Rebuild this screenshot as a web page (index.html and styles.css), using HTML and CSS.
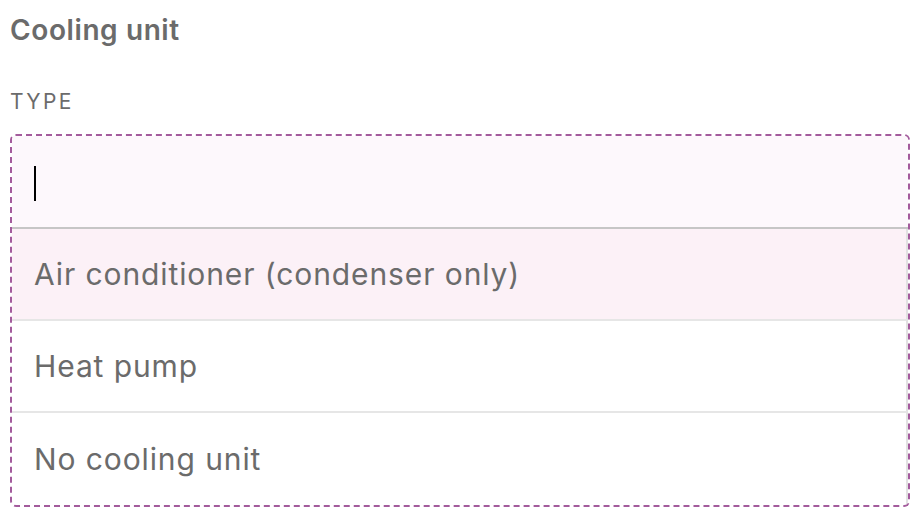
FILE: index.html
```html
<!DOCTYPE html>
<html lang="en">
<head>
  <meta charset="UTF-8">
  <meta name="viewport" content="width=device-width, initial-scale=1.0">
  <title>Cooling unit</title>
  <link rel="stylesheet" href="styles.css">
</head>
<body>
  <div class="field">
    <h2 class="field-title">Cooling unit</h2>
    <label class="field-label" for="type-input">Type</label>
    <div class="combo">
      <div class="combo-input" id="type-input"><span class="caret"></span></div>
      <ul class="combo-list">
        <li class="combo-option active">Air conditioner (condenser only)</li>
        <li class="combo-option">Heat pump</li>
        <li class="combo-option">No cooling unit</li>
      </ul>
    </div>
  </div>
</body>
</html>
```

FILE: styles.css
```css
body { margin: 0; padding: 0 10px; font-family: Inter, "Noto Sans", sans-serif; color: #6b6b6b; background: #fff; }
.field { width: 900px; }
.field-title { font-size: 28px; font-weight: 600; letter-spacing: 0.6px; margin: 0; padding-top: 13px; line-height: 34px; }
.field-label { display: block; text-transform: uppercase; font-size: 21px; letter-spacing: 2.4px; margin-top: 43px; line-height: 24px; }
.combo { margin-top: 20px; border: 2px dashed #a35b9c; border-radius: 6px; overflow: hidden; }
.combo-input { height: 91px; background: #fdf8fc; border-bottom: 2px solid #c6c6c6; display: flex; align-items: center; padding-left: 22px; }
.caret { display: block; width: 2px; height: 35px; margin-top: 3px; background: #000; }
.combo-list { list-style: none; margin: 0; padding: 0; }
.combo-option { height: 90px; display: flex; align-items: center; padding-left: 22px; font-size: 30px; letter-spacing: 0.9px; border-right: 2px solid #e2e2e2; }
.combo-option + .combo-option { border-top: 2px solid #e6e6e6; }
.combo-option:last-child { height: 92px; }
.combo-option.active { background: #fcf1f7; }
```
